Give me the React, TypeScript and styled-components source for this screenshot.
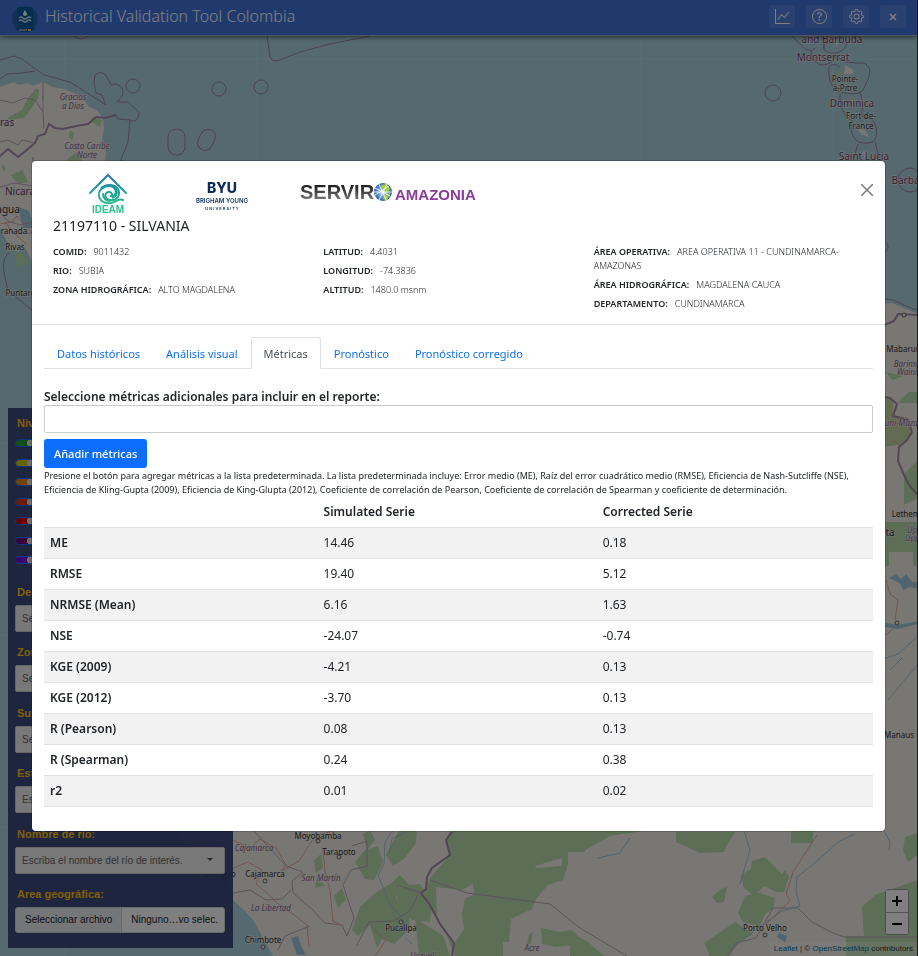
import React from "react";
import styled, { createGlobalStyle } from "styled-components";
import { BsGear, BsGraphUp, BsQuestionCircle } from "react-icons/bs";

const uiFont = `"Segoe UI", "Noto Sans", "Open Sans", sans-serif`;
const formFont = `Arial, "Liberation Sans", sans-serif`;

const GlobalStyle = createGlobalStyle`
  *, *::before, *::after { box-sizing: border-box; }
  body { margin: 0; font-family: ${uiFont}; color: #212529; }
  button, input, select { font: inherit; }
`;

const Page = styled.div`
  position: relative;
  display: flex;
  flex-direction: column;
  min-height: 100vh;
  overflow: hidden;
  border-right: 1px solid #333;
  background: #aad3df;
`;

/* ---------- map ---------- */

const MapCanvas = styled.svg`
  position: absolute;
  inset: 0;
  width: 100%;
  height: 100%;
  .land { fill: #f2efe9; }
  .forest { fill: #b8dcac; }
  .park { fill: #c8d6a6; }
  .water { fill: #9cc8dc; }
  .sea { fill: none; stroke: #9b85a5; stroke-width: 1; }
  .border { fill: none; stroke: #a78baa; stroke-width: 2; }
  .region { fill: none; stroke: #bca5bb; stroke-width: 1; }
  .road { fill: none; stroke: #e9a99c; stroke-width: 1; }
  .river { fill: none; stroke: #9fc6dc; stroke-width: 1; }
  .grid { fill: none; stroke: #b3d9e4; stroke-width: 1; }
  text {
    font-family: "Noto Sans", sans-serif;
    text-anchor: middle;
    paint-order: stroke;
    stroke: #f2efe9;
    stroke-width: 1px;
  }
  .country { font-size: 10px; fill: #6b3f6e; }
  .state { font-size: 8px; font-style: italic; fill: #8b6a94; }
  .city { font-size: 8px; fill: #333; }
  .town { font-size: 10px; fill: #333; }
  .dot { fill: #f2efe9; stroke: #666; stroke-width: 1; }
`;

function MapDrawing() {
  return (
    <MapCanvas viewBox="0 0 918 956" preserveAspectRatio="xMinYMin slice" aria-hidden="true">
      <path className="grid" d="M65 36V956M0 59H918M257 36V300M641 36V300M833 36V300M0 443H60M0 635H60M0 827H60" />

      {/* Central America */}
      <path className="land" d="M0 87L8 84L14 82L19 85L27 83L33 86L43 82L52 87L64 89L74 93L82 97L89 107L97 110L103 119L104 128L102 141L106 152L104 170H0Z" />
      <path className="forest" d="M36 88L39 90L38 98L33 106L24 118L10 120L7 118L22 110L28 98ZM68 158L78 152L83 162H66ZM92 118L102 120L100 127L92 122ZM70 130L74 133L72 141L69 136ZM42 95L44 98L42 102Z" />
      <path className="region" d="M43 82V112L35 100L25 98L13 103L0 100M43 112L44 128M0 142L8 140L18 145L22 140L35 143" />
      <path className="border" d="M0 156L8 149L18 157L28 149L35 143L38 136L45 134L49 124L55 128L63 129L76 126L88 124L96 117L105 118L116 115" />
      <path className="land" d="M0 160H60V270L32 262L25 247L18 252L10 247L2 232L0 228Z" />
      <path className="forest" d="M11 175L22 170L28 182L18 184ZM14 252L22 253L28 262L18 268ZM2 164L6 168L3 172Z" />
      <path className="water" d="M18 207L29 211L34 228H23Z" />
      <path className="region" d="M0 213L8 221L20 225L33 222M8 226L13 234L33 233M0 187L14 183L33 186" />
      <path className="road" d="M0 224L12 222L17 216L32 233M5 222L16 235L26 244" />
      <path className="sea" d="M0 60L14 56L22 59L44 75L70 82L106 105L105 103L102 95L96 93L94 83L95 75L100 72L106 75L111 85C124 81 127 96 117 101L118 102L128 102L136 109L139 113C138 122 133 122 130 120L118 119L116 115M130 120L128 142L120 162M0 79L7 74L22 73L35 71M74 36C77 40 84 40 88 36M9 253C2 258 2 267 8 290L34 312M33 157V161" />
      <circle className="sea" cx="133" cy="86" r="7" />
      <circle className="sea" cx="219" cy="89" r="7" />
      <circle className="sea" cx="261" cy="87" r="7" />
      <rect className="sea" x="168" y="129" width="17" height="26" rx="8" />
      <rect className="sea" x="199" y="129" width="15" height="22" rx="8" transform="rotate(26 207 140)" />
      <path className="sea" d="M267 36L270 56C271 62 276 61 280 60L300 52L330 44L370 36" />

      {/* Lesser Antilles */}
      <path className="sea" d="M792 36L801 45C808 52 812 52 815 48M811 51C812 56 815 65 823 65C830 64 833 61 835 57L847 62L857 63C866 62 872 66 869 77L864 88C861 95 852 94 845 93C831 91 828 78 829 69C829 63 836 64 840 67M840 94C840 108 843 115 852 121L851 128C853 143 862 145 873 142C878 137 878 128 872 119L861 114C864 108 862 98 860 92M858 144L853 161M875 142L880 161M824 50L822 36M825 36L824 49C828 56 845 54 847 43" />
      <circle className="sea" cx="773" cy="93" r="8" />
      <circle className="grid" cx="773" cy="93" r="3" />
      <path className="land" d="M835 41L839 44L836 46ZM845 65L853 70L853 74H844ZM857 128L865 130L869 137L861 134ZM863 151L867 154L864 159Z" />
      <path className="park" d="M837 70L842 73L842 78L838 76ZM849 96L854 100L854 107L850 103Z" />

      {/* Guyana and northern Brazil */}
      <circle className="sea" cx="910" cy="180" r="12" />
      <circle className="sea" cx="882" cy="247" r="6" />
      <path className="land" d="M880 304L892 303L918 314V850H880Z" />
      <path className="sea" d="M880 299C895 297 905 308 918 310" />
      <path className="park" d="M880 396L893 399L893 415L909 418L911 435L900 445L880 447Z" />
      <path className="forest" d="M899 403H918V392H909L900 400ZM904 474L918 460V498L904 505ZM880 522H918V566H880ZM880 545L889 540V566H880ZM914 820H918V835H914ZM886 372L904 376L892 380Z" />
      <rect className="land" x="889" y="552" width="24" height="24" />
      <path className="border" d="M880 396L890 398L897 404L893 416L908 420L912 432L907 440L899 447L898 461L904 475L909 485L918 495M880 327L894 321L898 314L918 315" />
      <path className="road" d="M886 580L890 594L898 600L895 620M898 624L880 640M892 440L900 445" />
      <path className="water" d="M889 578L896 574L901 579L906 574L912 582L918 582V589L910 587L903 590L900 583ZM880 622L898 625L918 621V624L898 629L880 626Z" />
      <path className="river" d="M880 660L898 654L918 636M890 670L903 657M888 700L918 664" />

      {/* Ecuador, Peru and the Amazon basin */}
      <path className="land" d="M178 820H918V956H273L264 940L254 921L246 912L233 900L228 880L221 862L214 850L190 848L178 838Z" />
      <path className="forest" d="M452 826H650V830L610 836L585 850V852H568V864L563 880L548 885L536 899L532 909L511 919L509 942H503V956H455L448 938L435 915L423 895L430 878L450 855L446 840Z" />
      <path className="forest" d="M676 832H735L727 845L724 852L700 853L676 842Z" />
      <path className="forest" d="M355 862L365 850L378 846L383 862L374 880L365 879ZM363 834L370 830L375 840L367 850ZM402 825L417 828L416 843L405 858L393 866L386 855ZM360 907L374 894L393 882L396 899L410 904L409 930L394 944L382 939L377 948L370 925L358 936L352 930ZM415 918L443 936L450 956H419ZM334 896L342 888L346 900L338 908ZM314 860L321 854L323 868L316 873ZM316 880L326 885L315 888ZM400 875L412 888L393 898L389 885ZM396 886L420 884L426 894L432 906L430 922L412 920L398 904Z" />
      <path className="land" d="M436 887L462 890L473 884L474 895L465 898L462 914L464 929L454 944L437 920ZM535 866L562 858V866L536 868Z" />
      <path className="forest" d="M529 935L533 931L531 944H527ZM541 928L560 932L572 930L578 936L578 944L556 947L542 944ZM570 932L588 942L604 956H570ZM713 855L716 860M741 875L751 869L752 861L765 857L782 874L785 870L789 877L784 892L776 892L764 886L754 896L744 888ZM712 897L721 889L727 887L724 902L717 903ZM745 896L759 893L775 898L773 909L765 914L760 926L743 922L738 913ZM704 943L716 935L735 922L753 934L739 942L729 956H710ZM791 831H813V843H791ZM862 907L875 895L895 888L918 880V956H846V936H864ZM905 837L918 833V855L908 862L903 851Z" />
      <path className="border" d="M452 832L446 840L450 855L432 868L427 877L426 889L421 893L430 905L440 924L454 943L452 956" />
      <path className="region" d="M430 880L467 893L550 904L580 928L627 956M254 831L286 866L303 872L292 881L293 893L312 909L325 923L342 925L347 936L354 918L343 885L351 870L367 866L367 841L352 846M233 893L250 890L266 900L282 899L291 890M310 926L285 936L278 950M397 885L419 892L411 910L394 921L369 922L357 945M728 956L736 943L756 938L764 924L773 908H798L812 922L833 933L844 937H918" />
      <path className="road" d="M231 869L248 862L262 870L256 884L268 894L278 904L293 914L307 925M233 840L250 848L260 839L276 848L286 865L281 871L299 861L315 836L333 831M323 850L325 871L330 890L333 921L341 925M373 929L386 940L375 956M765 925L790 901L786 894L793 872L802 858L817 835M307 925L309 947" />
      <path className="river" d="M396 826L385 842L384 864L378 875L385 892L391 906L400 915L406 930M417 826L392 839L389 853M855 834L838 842L826 853L811 866L797 877L796 892L800 906L782 911L758 928L733 948M884 831L890 842L889 850M744 831L750 850L740 884M598 858L620 853L630 838" />
      <path className="water" d="M291 938L298 936L301 945L306 955H297ZM779 933L787 936L785 942L777 937Z" />
      <path className="river" d="M405 938L412 944M293 941L300 950" />

      <text className="country" x="4" y="126">uras</text>
      <text className="state" x="73" y="100">Gracias</text>
      <text className="state" x="73" y="109">a Dios</text>
      <text className="state" x="87" y="149">Costa Caribe</text>
      <text className="state" x="87" y="158">Norte</text>
      <text className="country" x="29" y="195">Nicaragua</text>
      <text className="town" x="5" y="213">nagua</text>
      <text className="city" x="11" y="234">Granada</text>
      <text className="city" x="15" y="250">Rivas</text>
      <text className="city" x="27" y="296">Puntarenas</text>
      <text className="country" x="832" y="43">and Barbuda</text>
      <text className="country" x="823" y="61">Montserrat</text>
      <text className="city" x="845" y="82">Pointe-</text>
      <text className="city" x="845" y="91">à-Pitre</text>
      <text className="country" x="852" y="107">Dominica</text>
      <text className="city" x="861" y="119">Fort-de-</text>
      <text className="city" x="861" y="129">France</text>
      <text className="country" x="864" y="160">Saint Lucia</text>
      <text className="country" x="914" y="184">Barbados</text>
      <text className="city" x="907" y="352">Mabaruma</text>
      <text className="state" x="908" y="367">Barima-</text>
      <text className="state" x="907" y="375">Waini</text>
      <text className="state" x="902" y="426">Cuyuni-Mazaruni</text>
      <text className="city" x="906" y="517">Lethem</text>
      <text className="state" x="918" y="533">Upper</text>
      <text className="state" x="916" y="541">Upper</text>
      <text className="town" x="890" y="536">ta</text>
      <text className="city" x="899" y="738">Manaus</text>
      <text className="city" x="318" y="839">Moyobamba</text>
      <text className="city" x="339" y="855">Tarapoto</text>
      <text className="state" x="254" y="851">Cajamarca</text>
      <text className="city" x="265" y="877">Cajamarca</text>
      <text className="state" x="321" y="881">San Martín</text>
      <text className="state" x="271" y="911">La Libertad</text>
      <text className="city" x="220" y="877">Chiclayo</text>
      <text className="city" x="263" y="943">Chimbote</text>
      <text className="city" x="401" y="931">Pucallpa</text>
      <text className="state" x="532" y="951">Acre</text>
      <text className="state" x="423" y="959">Ucayali</text>
      <text className="city" x="765" y="931">Porto Velho</text>
      <circle className="dot" cx="318" cy="841" r="2" />
      <circle className="dot" cx="339" cy="857" r="2" />
      <circle className="dot" cx="265" cy="881" r="2" />
      <circle className="dot" cx="401" cy="922" r="2" />
      <circle className="dot" cx="263" cy="947" r="2" />
      <circle className="dot" cx="765" cy="935" r="2" />
      <circle className="dot" cx="904" cy="315" r="2" />
      <circle className="dot" cx="897" cy="623" r="2" />
    </MapCanvas>
  );
}

/* ---------- application shell ---------- */

const TopBar = styled.header`
  position: relative;
  display: flex;
  align-items: center;
  height: 36px;
  padding: 0 11px 0 12px;
  background: #4274dc;
  border-bottom: 1px solid #a0a8b8;
  box-shadow: 0 1px 5px rgba(0, 0, 0, 0.6);
`;

const AppLogo = styled.svg`
  width: 26px;
  height: 30px;
`;

const AppTitle = styled.h1`
  flex: 1;
  margin: 0 0 4px 7px;
  font-size: 16px;
  font-weight: 300;
  line-height: 22px;
  color: #fff;
`;

const BarActions = styled.div`
  display: flex;
  gap: 11px;
  margin-bottom: 2px;
`;

const BarButton = styled.button`
  display: flex;
  align-items: center;
  justify-content: center;
  width: 26px;
  height: 23px;
  padding: 0;
  border: 0;
  border-radius: 3px;
  background: rgba(255, 255, 255, 0.1);
  color: #fff;
`;

const Workspace = styled.div`
  position: relative;
  flex: 1;
  display: flex;
  align-items: flex-end;
  justify-content: space-between;
`;

const Sidebar = styled.aside`
  width: 225px;
  margin: 8px;
  padding: 7px 8px 15px 7px;
  background: rgba(50, 62, 118, 0.92);
  font-family: ${formFont};
`;

const FieldTitle = styled.span`
  display: block;
  margin: 0 2px;
  font-size: 11px;
  font-weight: 700;
  line-height: 17px;
  color: #ffc107;
`;

const ToggleList = styled.div`
  display: flex;
  flex-direction: column;
  justify-content: space-between;
  height: 125px;
  margin: 7px 0 20px;
`;

const Toggle = styled.input<{ $tint: string }>`
  appearance: none;
  display: block;
  width: 22px;
  height: 8px;
  margin: 0;
  border: 1px solid #0d6efd;
  border-radius: 4px;
  background: radial-gradient(circle at 14px 3px, #ddd 3px, transparent 3px) ${(p) => p.$tint};
`;

const Fields = styled.div`
  display: flex;
  flex-direction: column;
  justify-content: space-between;
  height: 349px;
`;

const Field = styled.label`
  display: flex;
  flex-direction: column;
  gap: 4px;
`;

const SelectShell = styled.span`
  position: relative;
  display: block;
  &::after {
    content: "";
    position: absolute;
    top: 11px;
    right: 12px;
    border: 3px solid transparent;
    border-top-color: #555;
  }
`;

const Select = styled.select`
  appearance: none;
  display: block;
  width: 100%;
  height: 27px;
  padding: 0 6px;
  border: 1px solid #ccc;
  border-radius: 2px;
  background: #f0f0f0;
  font-size: 10px;
  color: #666;
`;

const FileShell = styled.span`
  display: flex;
  height: 26px;
  border: 1px solid #ced4da;
  border-radius: 3px;
  background: #fff;
  overflow: hidden;
  font-size: 10px;
  line-height: 24px;
  white-space: nowrap;
  color: #212529;
`;

const FileInput = styled.input`
  position: absolute;
  width: 1px;
  height: 1px;
  opacity: 0;
`;

const FileAction = styled.span`
  padding: 0 9px;
  border-right: 1px solid #ced4da;
  background: #e9ecef;
`;

const FileName = styled.span`
  padding: 0 9px;
`;

const MapControls = styled.div`
  display: flex;
  flex-direction: column;
  align-items: flex-end;
  gap: 7px;
`;

const ZoomGroup = styled.div`
  display: flex;
  flex-direction: column;
  margin-right: 8px;
  border: 1px solid #999;
  border-radius: 3px;
  background: #fff;
  overflow: hidden;
`;

const ZoomButton = styled.button`
  display: flex;
  align-items: center;
  justify-content: center;
  width: 22px;
  height: 22px;
  padding: 0;
  border: 0;
  background: #fff;
  color: #000;
  & + & { border-top: 1px solid #aaa; }
`;

const Attribution = styled.div`
  padding: 0 4px;
  background: rgba(255, 255, 255, 0.3);
  font-family: ${formFont};
  font-size: 8px;
  line-height: 14px;
  color: #333;
  a { color: #0078a8; text-decoration: none; }
`;

/* ---------- modal ---------- */

const Backdrop = styled.div`
  position: fixed;
  inset: 0;
  padding: 161px 33px 32px 32px;
  overflow: auto;
  background: rgba(0, 0, 0, 0.5);
`;

const Dialog = styled.section`
  padding-bottom: 24px;
  border-radius: 4px;
  background: #fff;
  box-shadow: 0 0 0 1px rgba(0, 0, 0, 0.2);
`;

const DialogHeader = styled.header`
  display: flex;
  flex-direction: column;
  padding: 12px 21px 13px;
  border-bottom: 1px solid #dee2e6;
`;

const BrandRow = styled.div`
  display: flex;
  align-items: center;
  height: 42px;
`;

const BrandCell = styled.div<{ $width: number }>`
  display: flex;
  justify-content: center;
  width: ${(p) => p.$width}px;
`;

const CloseButton = styled.button`
  align-self: flex-start;
  display: flex;
  margin: 7px -13px 0 auto;
  padding: 4px;
  border: 0;
  background: none;
  color: #7a7a7a;
`;

const StationTitle = styled.h2`
  margin: 0 0 8px;
  font-size: 14px;
  font-weight: 400;
  line-height: 22px;
`;

const Facts = styled.div`
  display: grid;
  grid-template-columns: repeat(3, 1fr);
`;

const FactColumn = styled.dl`
  display: flex;
  flex-direction: column;
  gap: 5px;
  margin: 0;
`;

const Fact = styled.div`
  font-size: 9px;
  line-height: 14px;
  dt { display: inline; margin-right: 7px; font-weight: 600; }
  dd { display: inline; margin: 0; font-weight: 300; }
`;

const DialogBody = styled.div`
  padding: 12px 12px 0;
`;

const TabBar = styled.nav`
  display: flex;
  border-bottom: 1px solid #dee2e6;
`;

const Tab = styled.button<{ $active?: boolean }>`
  margin-bottom: -1px;
  padding: 7px 12px 6px;
  border: 1px solid;
  border-color: ${(p) => (p.$active ? "#dee2e6 #dee2e6 #fff" : "transparent")};
  border-radius: 3px 3px 0 0;
  background: ${(p) => (p.$active ? "#fff" : "none")};
  font-size: 11px;
  line-height: 17px;
  color: ${(p) => (p.$active ? "#495057" : "#0d6efd")};
`;

const MetricForm = styled.form`
  display: flex;
  flex-direction: column;
  align-items: flex-start;
  margin-top: 20px;
`;

const MetricLabel = styled.label`
  font-size: 12px;
  font-weight: 600;
  line-height: 16px;
`;

const MetricInput = styled.input`
  width: 100%;
  height: 28px;
  padding: 0 6px;
  border: 1px solid #ccc;
  border-radius: 2px;
  font-size: 12px;
`;

const AddButton = styled.button`
  height: 29px;
  margin-top: 6px;
  padding: 0 10px;
  border: 0;
  border-radius: 3px;
  background: #0d6efd;
  font-size: 11px;
  font-weight: 500;
  color: #fff;
`;

const Hint = styled.p`
  margin: 1px 0 0;
  font-size: 9px;
  line-height: 14px;
`;

const MetricTable = styled.table`
  width: 100%;
  border-collapse: separate;
  border-spacing: 0;
  table-layout: fixed;
  font-size: 12px;
  line-height: 18px;
  text-align: left;
  th, td { padding: 6px; border-bottom: 1px solid #dee2e6; }
  th { font-weight: 600; }
  th:first-child { width: 33%; }
  th:last-child { width: calc(100% / 3); }
  tbody tr:nth-child(odd) { background: #f2f2f2; }
`;

function IdeamLogo() {
  return (
    <svg width="42" height="42" viewBox="0 0 42 42" role="img" aria-label="IDEAM">
      <defs>
        <linearGradient id="ideam" x1="0" y1="0" x2="0" y2="32" gradientUnits="userSpaceOnUse">
          <stop offset="0" stopColor="#2f6db5" />
          <stop offset="0.5" stopColor="#1f9aa0" />
          <stop offset="1" stopColor="#2fb98c" />
        </linearGradient>
      </defs>
      <g fill="none" stroke="url(#ideam)" strokeLinecap="round">
        <path d="M3 20L21 2L39 20" strokeWidth="2" />
        <path d="M12 20C15 11 27 10 31 16C34 22 30 28 23 27C17 26 17 19 22 19C25 19 26 22 24 23" strokeWidth="2" />
        <path d="M15 15C20 11 27 12 29 17C30 21 28 23 26 24" strokeWidth="3" />
        <path d="M12 22C12 28 18 31 24 30C29 29 32 25 36 27" strokeWidth="2" />
        <path d="M16 21C16 25 19 28 23 28" strokeWidth="2" />
      </g>
      <text x="21" y="40" textAnchor="middle" fontFamily="Liberation Sans, sans-serif" fontWeight="700" fontSize="10" fill="#2cc08a">IDEAM</text>
    </svg>
  );
}

function ByuLogo() {
  return (
    <svg width="56" height="34" viewBox="0 0 56 34" role="img" aria-label="BYU Brigham Young University">
      <g fill="#0b2a5b" textAnchor="middle" fontFamily="Inter, sans-serif" fontWeight="800">
        <text x="28" y="16" fontSize="14">BYU</text>
        <text x="28" y="26" fontSize="6" fontWeight="600">BRIGHAM YOUNG</text>
        <text x="28" y="33" fontSize="4" fontWeight="600">U N I V E R S I T Y</text>
      </g>
    </svg>
  );
}

function ServirLogo() {
  return (
    <svg width="178" height="24" viewBox="0 0 178 24" role="img" aria-label="SERVIR Amazonia">
      <defs>
        <linearGradient id="servir" x1="0" y1="0" x2="0" y2="1">
          <stop offset="0.2" stopColor="#1f1f1f" />
          <stop offset="1" stopColor="#8a8a8a" />
        </linearGradient>
        <radialGradient id="globe">
          <stop offset="0" stopColor="#eaf4fb" />
          <stop offset="0.5" stopColor="#6fa6d6" />
          <stop offset="1" stopColor="#2a62a8" />
        </radialGradient>
      </defs>
      <text x="1" y="17" fontFamily="Liberation Sans, sans-serif" fontWeight="700" fontSize="20" fill="url(#servir)">SERVIR</text>
      <circle cx="84" cy="10" r="9" fill="url(#globe)" />
      <path d="M82 3L88 2L91 7L88 11L84 8ZM86 12L91 11L88 18L84 17Z" fill="#a5cd39" />
      <path d="M76 6L91 14M76 13L90 4M80 2L87 18M88 2L80 18M75 10H93" stroke="#fff" strokeWidth="0.800" fill="none" />
      <text x="96" y="18" fontFamily="Liberation Sans, sans-serif" fontWeight="700" fontSize="15" fill="#8e3a9d">AMAZONIA</text>
    </svg>
  );
}

const toggles = [
  ["Verde", "#2a9d2a"],
  ["Amarillo", "#c8c800"],
  ["Naranja", "#e08a00"],
  ["Naranja oscuro", "#d83a10"],
  ["Rojo", "#d00000"],
  ["Púrpura", "#780070"],
  ["Violeta", "#7b00d8"],
];

const selects = [
  ["Departamento:", "Seleccione el departamento"],
  ["Zona hidrográfica:", "Seleccione la zona"],
  ["Subzona hidrográfica:", "Seleccione la subzona"],
  ["Estación:", "Escriba el nombre de la estación"],
  ["Nombre de río:", "Escriba el nombre del río de interés."],
];

const facts = [
  [["COMID:", "9011432"], ["RIO:", "SUBIA"], ["ZONA HIDROGRÁFICA:", "ALTO MAGDALENA"]],
  [["LATITUD:", "4.4031"], ["LONGITUD:", "-74.3836"], ["ALTITUD:", "1480.0 msnm"]],
  [
    ["ÁREA OPERATIVA:", "AREA OPERATIVA 11 - CUNDINAMARCA-AMAZONAS"],
    ["ÁREA HIDROGRÁFICA:", "MAGDALENA CAUCA"],
    ["DEPARTAMENTO:", "CUNDINAMARCA"],
  ],
];

const tabs = ["Datos históricos", "Análisis visual", "Métricas", "Pronóstico", "Pronóstico corregido"];

const metrics = [
  ["ME", "14.46", "0.18"],
  ["RMSE", "19.40", "5.12"],
  ["NRMSE (Mean)", "6.16", "1.63"],
  ["NSE", "-24.07", "-0.74"],
  ["KGE (2009)", "-4.21", "0.13"],
  ["KGE (2012)", "-3.70", "0.13"],
  ["R (Pearson)", "0.08", "0.13"],
  ["R (Spearman)", "0.24", "0.38"],
  ["r2", "0.01", "0.02"],
];

export default function App() {
  return (
    <>
      <GlobalStyle />
      <Page>
        <MapDrawing />
        <TopBar>
          <AppLogo viewBox="0 0 26 30" aria-hidden="true">
            <circle cx="13" cy="16" r="13" fill="#2463b4" />
            <rect x="5" y="4" width="16" height="21" rx="2" fill="#075c9c" />
            <path d="M13 7C14 9 15 10 15 11A2 2 0 0 1 11 11C11 10 12 9 13 7Z" fill="#fff" />
            <path d="M7 15Q9 13 11 15T15 15T19 15M7 18Q9 16 11 18T15 18T19 18" stroke="#cfe6f5" strokeWidth="1.500" fill="none" />
            <path d="M3 25H23Q20 29 13 29T3 25Z" fill="#0a4fa0" />
            <path d="M7 27H15" stroke="#dfe9f5" strokeWidth="1" />
            <path d="M16 27H19" stroke="#f0c060" strokeWidth="2" />
          </AppLogo>
          <AppTitle>Historical Validation Tool Colombia</AppTitle>
          <BarActions>
            <BarButton aria-label="Gráficos"><BsGraphUp size={15} /></BarButton>
            <BarButton aria-label="Ayuda"><BsQuestionCircle size={15} /></BarButton>
            <BarButton aria-label="Configuración"><BsGear size={15} /></BarButton>
            <BarButton aria-label="Salir">
              <svg width="8" height="8" viewBox="0 0 8 8"><path d="M1 1L7 7M7 1L1 7" stroke="currentColor" strokeWidth="1.500" /></svg>
            </BarButton>
          </BarActions>
        </TopBar>
        <Workspace>
          <Sidebar>
            <FieldTitle>Niveles de alerta:</FieldTitle>
            <ToggleList>
              {toggles.map(([name, tint]) => (
                <Toggle key={name} $tint={tint} type="checkbox" defaultChecked aria-label={name} />
              ))}
            </ToggleList>
            <Fields>
              {selects.map(([title, hint]) => (
                <Field key={title}>
                  <FieldTitle>{title}</FieldTitle>
                  <SelectShell>
                    <Select><option>{hint}</option></Select>
                  </SelectShell>
                </Field>
              ))}
              <Field>
                <FieldTitle>Area geográfica:</FieldTitle>
                <FileInput type="file" />
                <FileShell>
                  <FileAction>Seleccionar archivo</FileAction>
                  <FileName>Ninguno…vo selec.</FileName>
                </FileShell>
              </Field>
            </Fields>
          </Sidebar>
          <MapControls>
            <ZoomGroup>
              <ZoomButton aria-label="Acercar">
                <svg width="10" height="10" viewBox="0 0 10 10"><path d="M0 5H10M5 0V10" stroke="currentColor" strokeWidth="2" /></svg>
              </ZoomButton>
              <ZoomButton aria-label="Alejar">
                <svg width="10" height="10" viewBox="0 0 10 10"><path d="M0 5H10" stroke="currentColor" strokeWidth="2" /></svg>
              </ZoomButton>
            </ZoomGroup>
            <Attribution>
              <a href="#leaflet">Leaflet</a> | © <a href="#osm">OpenStreetMap</a> contributors
            </Attribution>
          </MapControls>
        </Workspace>
      </Page>

      <Backdrop>
        <Dialog role="dialog" aria-modal="true" aria-labelledby="station">
          <DialogHeader>
            <BrandRow>
              <BrandCell $width={109}><IdeamLogo /></BrandCell>
              <BrandCell $width={120}><ByuLogo /></BrandCell>
              <BrandCell $width={212}><ServirLogo /></BrandCell>
              <CloseButton aria-label="Cerrar">
                <svg width="12" height="12" viewBox="0 0 12 12"><path d="M0 0L12 12M12 0L0 12" stroke="currentColor" strokeWidth="1.500" /></svg>
              </CloseButton>
            </BrandRow>
            <StationTitle id="station">21197110 - SILVANIA</StationTitle>
            <Facts>
              {facts.map((column, i) => (
                <FactColumn key={i}>
                  {column.map(([term, value]) => (
                    <Fact key={term}><dt>{term}</dt><dd>{value}</dd></Fact>
                  ))}
                </FactColumn>
              ))}
            </Facts>
          </DialogHeader>
          <DialogBody>
            <TabBar>
              {tabs.map((name) => (
                <Tab key={name} type="button" $active={name === "Métricas"}>{name}</Tab>
              ))}
            </TabBar>
            <MetricForm onSubmit={(e) => e.preventDefault()}>
              <MetricLabel htmlFor="metrics">Seleccione métricas adicionales para incluir en el reporte:</MetricLabel>
              <MetricInput id="metrics" type="text" />
              <AddButton type="submit">Añadir métricas</AddButton>
            </MetricForm>
            <Hint>
              Presione el botón para agregar métricas a la lista predeterminada. La lista predeterminada incluye: Error
              medio (ME), Raíz del error cuadrático medio (RMSE), Eficiencia de Nash-Sutcliffe (NSE), Eficiencia de
              Kling-Gupta (2009), Eficiencia de King-Glupta (2012), Coeficiente de correlación de Pearson, Coeficiente
              de correlación de Spearman y coeficiente de determinación.
            </Hint>
            <MetricTable>
              <thead>
                <tr>
                  <th aria-label="Métrica" />
                  <th scope="col">Simulated Serie</th>
                  <th scope="col">Corrected Serie</th>
                </tr>
              </thead>
              <tbody>
                {metrics.map(([name, simulated, corrected]) => (
                  <tr key={name}>
                    <th scope="row">{name}</th>
                    <td>{simulated}</td>
                    <td>{corrected}</td>
                  </tr>
                ))}
              </tbody>
            </MetricTable>
          </DialogBody>
        </Dialog>
      </Backdrop>
    </>
  );
}
